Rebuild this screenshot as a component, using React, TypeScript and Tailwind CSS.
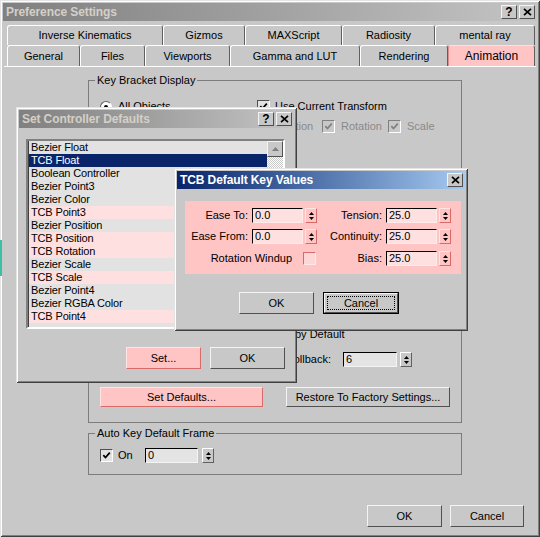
import React from 'react';

const raised = 'border border-t-[#f4f4f4] border-l-[#f4f4f4] border-r-[#505050] border-b-[#505050]';
const frame =
  'shadow-[inset_1px_1px_#e4e4e4,inset_-1px_-1px_#404040,inset_2px_2px_#ffffff,inset_-2px_-2px_#808080]';

const row1 = [
  { label: 'Inverse Kinematics', w: 'w-[156px]' },
  { label: 'Gizmos', w: 'w-[82px]' },
  { label: 'MAXScript', w: 'w-[97px]' },
  { label: 'Radiosity', w: 'w-[93px]' },
  { label: 'mental ray', w: 'w-[100px]' },
];

const row2 = [
  { label: 'General', w: 'w-[73px]' },
  { label: 'Files', w: 'w-[65px]' },
  { label: 'Viewports', w: 'w-[85px]' },
  { label: 'Gamma and LUT', w: 'w-[130px]' },
  { label: 'Rendering', w: 'w-[88px]' },
  { label: 'Animation', w: 'w-[87px]', active: true },
];

const controllers = [
  { name: 'Bezier Float', tcb: false },
  { name: 'TCB Float', tcb: true, selected: true },
  { name: 'Boolean Controller', tcb: false },
  { name: 'Bezier Point3', tcb: false },
  { name: 'Bezier Color', tcb: false },
  { name: 'TCB Point3', tcb: true },
  { name: 'Bezier Position', tcb: false },
  { name: 'TCB Position', tcb: true },
  { name: 'TCB Rotation', tcb: true },
  { name: 'Bezier Scale', tcb: false },
  { name: 'TCB Scale', tcb: true },
  { name: 'Bezier Point4', tcb: false },
  { name: 'Bezier RGBA Color', tcb: false },
  { name: 'TCB Point4', tcb: true },
];

function TitleButton({ kind }: { kind: 'help' | 'close' }) {
  return (
    <div className={`w-[16px] h-[14px] bg-[#c8c8c8] flex items-center justify-center ${raised}`}>
      {kind === 'help' ? (
        <span className="text-[12px] font-bold leading-none text-black">?</span>
      ) : (
        <svg width="9" height="8" viewBox="0 0 9 8">
          <path d="M1 0.8l7 6.4M8 0.8l-7 6.4" stroke="#000" strokeWidth="1.7" />
        </svg>
      )}
    </div>
  );
}

function TitleBar({ title, active, help }: { title: string; active?: boolean; help?: boolean }) {
  return (
    <div
      className={`h-[18px] flex items-center pl-[3px] pr-[2px] ${
        active
          ? 'bg-linear-to-r from-[#0a246a] to-[#a6caf0] text-white'
          : 'bg-linear-to-r from-[#808080] to-[#c4c4c4] text-[#d4d0c8]'
      }`}
    >
      <span className="flex-1 text-[12px] font-bold leading-none tracking-[-0.1px]">{title}</span>
      <div className="flex gap-[2px]">
        {help && <TitleButton kind="help" />}
        <TitleButton kind="close" />
      </div>
    </div>
  );
}

function Button({ label, w, pink, focus }: { label: string; w: string; pink?: boolean; focus?: boolean }) {
  const face = pink
    ? 'bg-[#ffc4c4] border border-t-[#ffe4e4] border-l-[#ffe4e4] border-r-[#d86a6a] border-b-[#d86a6a]'
    : `bg-[#c8c8c8] ${raised}`;
  if (focus) {
    return (
      <div className={`${w} h-[22px] border border-black`}>
        <div className={`w-full h-full ${face} p-[2px]`}>
          <div className="w-full h-full border border-dotted border-black flex items-center justify-center">
            {label}
          </div>
        </div>
      </div>
    );
  }
  return <div className={`${w} h-[22px] ${face} flex items-center justify-center`}>{label}</div>;
}

function Check({ checked, tone }: { checked?: boolean; tone: 'light' | 'disabled' | 'pink' }) {
  const box =
    tone === 'pink'
      ? 'bg-[#ffd6d6] border border-t-[#d86a6a] border-l-[#d86a6a] border-r-[#ffe8e8] border-b-[#ffe8e8]'
      : tone === 'disabled'
      ? 'bg-[#c8c8c8] border border-t-[#808080] border-l-[#808080] border-r-white border-b-white'
      : 'bg-[#e2e2e2] border border-t-[#505050] border-l-[#505050] border-r-white border-b-white';
  return (
    <div className={`w-[13px] h-[13px] shrink-0 flex items-center justify-center ${box}`}>
      {checked && (
        <svg width="9" height="9" viewBox="0 0 9 9">
          <path
            d="M1.3 4.2l2.2 2.3 4.3-4.8"
            stroke={tone === 'disabled' ? '#808080' : '#000'}
            strokeWidth="1.8"
            fill="none"
          />
        </svg>
      )}
    </div>
  );
}

function Edit({ value, w, pink }: { value: string; w: string; pink?: boolean }) {
  return (
    <div
      className={`${w} h-[15px] flex items-center pl-[2px] border ${
        pink
          ? 'bg-[#ffe0e0] border-t-black border-l-black border-r-[#ffeaea] border-b-[#ffeaea]'
          : 'bg-[#e4e4e4] border-t-black border-l-black border-r-[#f4f4f4] border-b-[#f4f4f4]'
      }`}
    >
      {value}
    </div>
  );
}

function Spinner({ pink }: { pink?: boolean }) {
  return (
    <div
      className={`w-[12px] h-[15px] shrink-0 flex flex-col items-center justify-center gap-[2px] border ${
        pink
          ? 'bg-[#ffc4c4] border-t-[#ffe4e4] border-l-[#ffe4e4] border-r-[#d86a6a] border-b-[#d86a6a]'
          : 'bg-[#c8c8c8] border-t-white border-l-white border-r-[#606060] border-b-[#606060]'
      }`}
    >
      <svg width="5" height="3" viewBox="0 0 5 3">
        <path d="M2.5 0L5 3H0z" fill="#000" />
      </svg>
      <svg width="5" height="3" viewBox="0 0 5 3">
        <path d="M0 0h5L2.5 3z" fill="#000" />
      </svg>
    </div>
  );
}

function GroupBox({ label, className, children }: { label: string; className: string; children?: React.ReactNode }) {
  return (
    <div className={`relative border border-[#7c7c7c] ${className}`}>
      <span className="absolute -top-[8px] left-[6px] px-[2px] bg-[#c8c8c8] leading-[14px]">{label}</span>
      {children}
    </div>
  );
}

function SetControllerDialog() {
  return (
    <div className={`absolute left-[16px] top-[107px] w-[281px] h-[276px] bg-[#c8c8c8] flex flex-col ${frame}`}>
      <div className="mt-[3px] mx-[3px]">
        <TitleBar title="Set Controller Defaults" help />
      </div>
      <div className="ml-[10px] mt-[11px] w-[259px] h-[190px] border-2 border-t-[#808080] border-l-[#808080] border-r-white border-b-white shadow-[inset_1px_1px_#404040] bg-[#e2e2e2] flex">
        <div className="flex-1 flex flex-col pl-[1px]">
          {controllers.map((c) => (
            <div
              key={c.name}
              className={`h-[13px] flex items-center pl-[2px] text-[11px] tracking-[-0.15px] leading-none ${
                c.selected ? 'bg-[#0a246a] text-white' : c.tcb ? 'bg-[#ffe0e0]' : 'bg-[#e2e2e2]'
              }`}
            >
              {c.name}
            </div>
          ))}
        </div>
        <div className="w-[16px] flex flex-col">
          <div className={`h-[16px] bg-[#c8c8c8] flex items-center justify-center ${raised}`}>
            <svg width="7" height="4" viewBox="0 0 7 4">
              <path d="M3.5 0L7 4H0z" fill="#808080" />
            </svg>
          </div>
          <div className="flex-1 bg-[repeating-conic-gradient(#ffffff_0_25%,#c8c8c8_0_50%)] bg-[length:2px_2px]" />
        </div>
      </div>
      <div className="flex mt-[18px] ml-[110px] gap-[9px]">
        <Button label="Set..." w="w-[75px]" pink />
        <Button label="OK" w="w-[75px]" />
      </div>
    </div>
  );
}

function TcbDialog() {
  return (
    <div className={`absolute left-[174px] top-[168px] w-[294px] h-[163px] bg-[#c8c8c8] flex flex-col ${frame}`}>
      <div className="mt-[3px] mx-[3px]">
        <TitleBar title="TCB Default Key Values" active />
      </div>
      <div className="ml-[11px] mt-[12px] w-[276px] h-[73px] bg-[#ffc4c4] pt-[7px] flex flex-col gap-[6px]">
        <div className="flex h-[15px]">
          <div className="w-[132px] flex items-center justify-end">
            <span>Ease To:</span>
            <div className="ml-[4px]"><Edit value="0.0" w="w-[51px]" pink /></div>
            <div className="ml-[2px]"><Spinner pink /></div>
          </div>
          <div className="w-[134px] flex items-center justify-end">
            <span>Tension:</span>
            <div className="ml-[4px]"><Edit value="25.0" w="w-[51px]" pink /></div>
            <div className="ml-[2px]"><Spinner pink /></div>
          </div>
        </div>
        <div className="flex h-[15px]">
          <div className="w-[132px] flex items-center justify-end">
            <span>Ease From:</span>
            <div className="ml-[4px]"><Edit value="0.0" w="w-[51px]" pink /></div>
            <div className="ml-[2px]"><Spinner pink /></div>
          </div>
          <div className="w-[134px] flex items-center justify-end">
            <span>Continuity:</span>
            <div className="ml-[4px]"><Edit value="25.0" w="w-[51px]" pink /></div>
            <div className="ml-[2px]"><Spinner pink /></div>
          </div>
        </div>
        <div className="flex h-[15px] mt-[1px]">
          <div className="w-[132px] flex items-center justify-end pr-[1px]">
            <span>Rotation Windup</span>
            <div className="ml-[11px]"><Check tone="pink" /></div>
          </div>
          <div className="w-[134px] flex items-center justify-end">
            <span>Bias:</span>
            <div className="ml-[4px]"><Edit value="25.0" w="w-[51px]" pink /></div>
            <div className="ml-[2px]"><Spinner pink /></div>
          </div>
        </div>
      </div>
      <div className="flex mt-[18px] ml-[65px] gap-[9px]">
        <Button label="OK" w="w-[75px]" />
        <Button label="Cancel" w="w-[76px]" focus />
      </div>
    </div>
  );
}

export default function App() {
  return (
    <div
      className={`relative w-[540px] h-[537px] bg-[#c8c8c8] overflow-hidden flex flex-col text-[11px] text-black font-['Liberation_Sans',Arial,sans-serif] ${frame}`}
    >
      <div className="absolute left-0 top-[240px] w-[2px] h-[36px] bg-[#3cc0a4]" />

      <div className="mt-[3px] mx-[3px]">
        <TitleBar title="Preference Settings" help />
      </div>

      {/* tabs */}
      <div className="mt-[4px] ml-[7px] flex flex-col">
        <div className="flex h-[20px]">
          {row1.map((t) => (
            <div
              key={t.label}
              className={`${t.w} h-full flex items-center justify-center border-t border-l border-r border-t-white border-l-white border-r-[#606060] rounded-t-[3px]`}
            >
              {t.label}
            </div>
          ))}
        </div>
        <div className="flex h-[21px]">
          {row2.map((t) => (
            <div
              key={t.label}
              className={`${t.w} h-full flex items-center justify-center border-t border-l border-r rounded-t-[3px] ${
                t.active
                  ? 'bg-[#ffc4c4] border-t-[#ffe0e0] border-l-[#e08a8a] border-r-[#606060] text-[12px]'
                  : 'border-t-white border-l-white border-r-[#606060]'
              }`}
            >
              {t.label}
            </div>
          ))}
        </div>
      </div>

      {/* tab page */}
      <div className="mx-[4px] border-t border-t-white flex-1 flex flex-col">
        <GroupBox label="Key Bracket Display" className="ml-[84px] mt-[13px] w-[374px] h-[343px] flex flex-col">
          <div className="mt-[19px] ml-[11px] flex items-center h-[13px]">
            <div className="w-[157px] flex items-center gap-[6px]">
              <div className="w-[12px] h-[12px] rounded-full bg-white border border-t-[#606060] border-l-[#606060] border-r-white border-b-white flex items-center justify-center">
                <div className="w-[4px] h-[4px] rounded-full bg-black" />
              </div>
              <span>All Objects</span>
            </div>
            <Check tone="light" checked />
            <span className="ml-[5px]">Use Current Transform</span>
          </div>
          <div className="mt-[7px] ml-[11px] flex items-center h-[13px] text-[#8a8a8a]">
            <div className="w-[157px]" />
            <div className="w-[65px] flex items-center gap-[4px]">
              <Check tone="disabled" checked />
              <span>Position</span>
            </div>
            <div className="w-[66px] flex items-center gap-[6px]">
              <Check tone="disabled" checked />
              <span>Rotation</span>
            </div>
            <div className="flex items-center gap-[6px]">
              <Check tone="disabled" checked />
              <span>Scale</span>
            </div>
          </div>
          <div className="mt-[195px] ml-[206px] h-[13px] flex items-center">by Default</div>
          <div className="mt-[11px] flex items-center h-[15px]">
            <div className="w-[242px] text-right">Rollback:</div>
            <div className="ml-[12px]"><Edit value="6" w="w-[54px]" /></div>
            <div className="ml-[3px]"><Spinner /></div>
          </div>
          <div className="mt-[20px] ml-[11px] flex gap-[23px]">
            <div className="w-[163px] h-[20px] bg-[#ffc4c4] border border-t-[#ffe4e4] border-l-[#ffe4e4] border-r-[#d86a6a] border-b-[#d86a6a] flex items-center justify-center">
              Set Defaults...
            </div>
            <div className={`w-[164px] h-[20px] bg-[#c8c8c8] flex items-center justify-center ${raised}`}>
              Restore To Factory Settings...
            </div>
          </div>
        </GroupBox>

        <GroupBox label="Auto Key Default Frame" className="ml-[84px] mt-[10px] w-[374px] h-[42px] flex flex-col">
          <div className="mt-[14px] ml-[11px] flex items-center h-[15px]">
            <Check tone="light" checked />
            <span className="ml-[5px] w-[27px]">On</span>
            <Edit value="0" w="w-[53px]" />
            <div className="ml-[4px]"><Spinner /></div>
          </div>
        </GroupBox>
      </div>

      <div className="mb-[10px] pr-[16px] flex justify-end gap-[8px]">
        <Button label="OK" w="w-[75px]" />
        <Button label="Cancel" w="w-[74px]" />
      </div>

      <SetControllerDialog />
      <TcbDialog />
    </div>
  );
}
